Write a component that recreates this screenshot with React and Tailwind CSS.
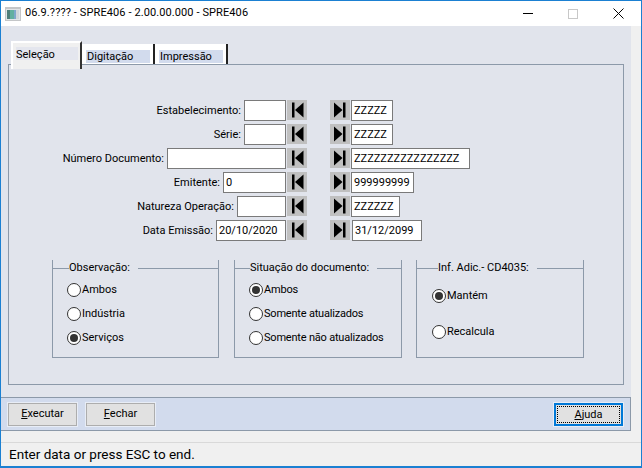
const rows = [
  { label: "Estabelecimento:", left: "", leftW: "w-[42px]", right: "ZZZZZ", rightW: "ml-px w-[42px]" },
  { label: "Série:", left: "", leftW: "w-[42px]", right: "ZZZZZ", rightW: "ml-px w-[42px]" },
  { label: "Número Documento:", left: "", leftW: "w-[119px]", right: "ZZZZZZZZZZZZZZZZ", rightW: "ml-px w-[119px]" },
  { label: "Emitente:", left: "0", leftW: "w-[63px]", right: "999999999", rightW: "ml-px w-[63px]" },
  { label: "Natureza Operação:", left: "", leftW: "w-[49px]", right: "ZZZZZZ", rightW: "ml-px w-[49px]" },
  { label: "Data Emissão:", left: "20/10/2020", leftW: "w-[70px]", right: "31/12/2099", rightW: "ml-[2px] w-[70px]" },
];

function Field({ value, className = "" }) {
  return (
    <div className={`h-[21px] border border-[#7a7a7a] bg-white leading-[19px] whitespace-nowrap overflow-hidden pl-[2px] ${className}`}>
      {value}
    </div>
  );
}

function NavButton({ last }) {
  return (
    <div className="w-[20px] h-[20px] bg-[#c0c0c0] flex items-center justify-center">
      <svg width="20" height="20" viewBox="0 0 20 20">
        {last ? (
          <g fill="#000">
            <polygon points="4,2.5 12.5,10 4,17.5" />
            <rect x="13" y="2.5" width="2.5" height="15" />
          </g>
        ) : (
          <g fill="#000">
            <rect x="5" y="2.5" width="2.5" height="15" />
            <polygon points="16.5,2.5 8,10 16.5,17.5" />
          </g>
        )}
      </svg>
    </div>
  );
}

function Radio({ label, checked }) {
  return (
    <div className="flex items-center h-[14px] gap-px">
      <span className="w-[14px] h-[14px] rounded-full border border-[#333] bg-white flex items-center justify-center shrink-0">
        {checked && <span className="w-[8px] h-[8px] rounded-full bg-[#333]" />}
      </span>
      <span className="whitespace-nowrap pt-px">{label}</span>
    </div>
  );
}

function Group({ title, className = "", lead = "w-[16px]", children }) {
  return (
    <fieldset className={`h-[98px] border border-[#8c99a9] border-t-0 ${className}`}>
      <div className="flex items-center h-[16px]">
        <div className={`${lead} border-t border-[#8c99a9]`} />
        <span className="whitespace-nowrap pr-2 pt-px">{title}</span>
        <div className="flex-1 border-t border-[#8c99a9]" />
      </div>
      {children}
    </fieldset>
  );
}

function ActionButton({ children, className = "" }) {
  return (
    <button className={`w-[69px] h-[23px] bg-[#e1e1e1] border border-[#adadad] outline outline-1 outline-[#e8edf6] leading-[20px] ${className}`}>
      {children}
    </button>
  );
}

export default function App() {
  return (
    <div className="w-[642px] h-[468px] border border-[#1b80d2] border-b-2 flex flex-col bg-[#f0f0f0] text-[11px] text-black font-['Roboto',sans-serif] overflow-hidden">
      {/* title bar */}
      <div className="h-[25px] bg-white flex items-center shrink-0">
        <svg className="ml-[4px] mr-[4px]" width="16" height="14" viewBox="0 0 16 14">
          <rect width="16" height="14" fill="#c4c6c8" />
          <rect x="1" y="2" width="14" height="11" fill="#e2e5e8" />
          <rect x="2" y="3" width="3" height="9" fill="#4f7f7a" />
          <rect x="5" y="3" width="4" height="9" fill="#62b0a0" />
          <rect x="9" y="3" width="2" height="9" fill="#7fa8cc" />
          <rect x="11" y="3" width="3" height="9" fill="#d0d6da" />
        </svg>
        <span className="whitespace-nowrap tracking-[0.1px]">06.9.???? - SPRE406 - 2.00.00.000 - SPRE406</span>
        <div className="ml-auto flex items-center">
          <div className="w-[10px] h-px bg-black" />
          <div className="w-[10px] h-[10px] border border-[#c8c8c8] ml-[35px]" />
          <svg className="ml-[35px] mr-[17px]" width="11" height="11" viewBox="0 0 11 11" stroke="#000" strokeWidth="1">
            <path d="M0.5 0.5L10.5 10.5M10.5 0.5L0.5 10.5" />
          </svg>
        </div>
      </div>

      <div className="flex h-[405px] shrink-0">
        <div className="w-[630px] flex flex-col">
          {/* main area */}
          <div className="h-[372px] bg-[#e1e4ec] pt-[15px] px-[7px]">
            <div className="flex h-[23px] pl-[3px] relative z-10">
              <div className="w-[71px] h-[28px] bg-[#f0f0f0] border-t-2 border-l-2 border-white border-r-2 border-r-[#333] pt-[4px] pl-[3px]">
                <div className="w-[62px] h-[13px] bg-[#e4e6ee] leading-[15px]">Seleção</div>
              </div>
              <div className="w-[73px] h-[20px] mt-[3px] bg-white border-r-2 border-r-[#222] pt-[6px] pl-[4px]">
                <div className="w-[64px] h-[13px] bg-[#d2dbed] pl-px leading-[14px]">Digitação</div>
              </div>
              <div className="w-[73px] h-[20px] mt-[3px] bg-white border-r-2 border-r-[#222] pt-[6px] pl-[4px]">
                <div className="w-[64px] h-[13px] bg-[#d2dbed] pl-px leading-[14px]">Impressão</div>
              </div>
            </div>
            <div className="w-[616px] h-[321px] border border-[#8c99a9] pt-[35px]">
              <div className="flex flex-col gap-[3px]">
                {rows.map((r) => (
                  <div key={r.label} className="flex items-start h-[21px]">
                    <div className="w-[277px] flex justify-end items-center gap-[3px]">
                      <span className="whitespace-nowrap pt-px">{r.label}</span>
                      <Field value={r.left} className={r.leftW} />
                    </div>
                    <div className="ml-px"><NavButton /></div>
                    <div className="ml-[23px]"><NavButton last /></div>
                    <Field value={r.right} className={r.rightW} />
                  </div>
                ))}
              </div>
              <div className="flex mt-[19px] ml-[43px]">
                <Group title="Observação:" className="w-[167px]">
                  <div className="flex flex-col gap-[10px] pt-[7px] pl-[14px]">
                    <Radio label="Ambos" />
                    <Radio label="Indústria" />
                    <Radio label="Serviços" checked />
                  </div>
                </Group>
                <Group title="Situação do documento:" lead="w-[15px]" className="w-[168px] ml-[15px]">
                  <div className="flex flex-col gap-[10px] pt-[7px] pl-[14px] tracking-[-0.2px]">
                    <Radio label="Ambos" checked />
                    <Radio label="Somente atualizados" />
                    <Radio label="Somente não atualizados" />
                  </div>
                </Group>
                <Group title="Inf. Adic.- CD4035:" lead="w-[21px]" className="w-[168px] ml-[14px]">
                  <div className="flex flex-col gap-[22px] pt-[13px] pl-[15px]">
                    <Radio label="Mantém" checked />
                    <Radio label="Recalcula" />
                  </div>
                </Group>
              </div>
            </div>
          </div>
          {/* button bar */}
          <div className="h-[34px] bg-[#d2dbed] border-y border-r border-[#8c99a9] flex items-center pl-[7px] pr-[7px]">
            <ActionButton><span className="underline">E</span>xecutar</ActionButton>
            <ActionButton className="ml-[9px]"><span className="underline">F</span>echar</ActionButton>
            <ActionButton className="ml-auto !border-2 !border-[#0078d7]">
              <span className="block mx-px border border-dotted border-black leading-[15px]"><span className="underline">A</span>juda</span>
            </ActionButton>
          </div>
        </div>
      </div>

      {/* status bar */}
      <div className="flex-1 mt-[11px] border-t border-[#d9d9d9] pl-[8px] pt-[1px] text-[13.5px] leading-[20px]">
        Enter data or press ESC to end.
      </div>
    </div>
  );
}
